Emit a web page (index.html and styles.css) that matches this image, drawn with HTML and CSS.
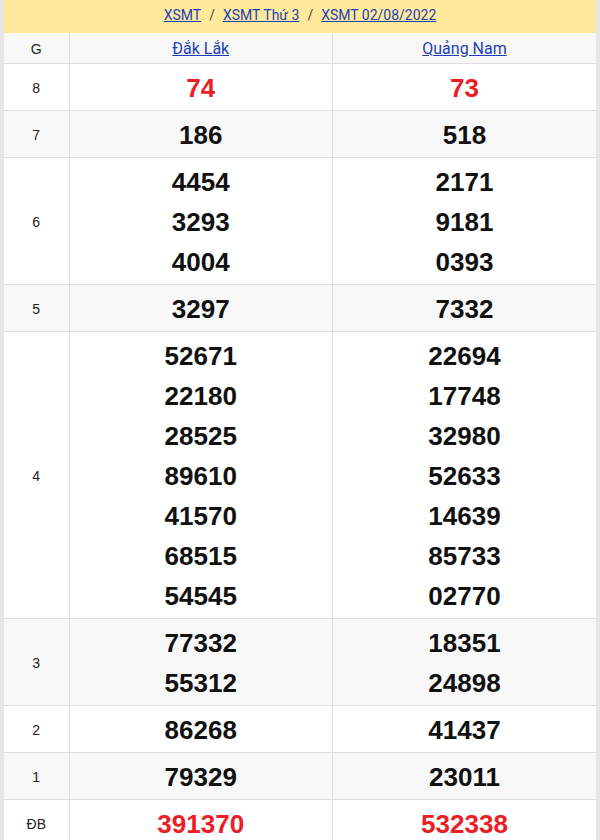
FILE: index.html
```html
<!DOCTYPE html>
<html>
<head>
<meta charset="utf-8">
<link rel="stylesheet" href="styles.css">
</head>
<body>
<div class="page">
  <div class="crumbs">
    <a href="#">XSMT</a><span class="sep">/</span><a href="#">XSMT Thứ 3</a><span class="sep">/</span><a href="#">XSMT 02/08/2022</a>
  </div>
  <table class="kq">
    <colgroup><col class="c-g"><col class="c-p"><col class="c-p"></colgroup>
    <tr class="alt head">
      <td class="lbl">G</td>
      <td><a href="#" class="prov">Đắk Lắk</a></td>
      <td><a href="#" class="prov">Quảng Nam</a></td>
    </tr>
    <tr>
      <td class="lbl">8</td>
      <td><div class="num red">74</div></td>
      <td><div class="num red">73</div></td>
    </tr>
    <tr class="alt">
      <td class="lbl">7</td>
      <td><div class="num">186</div></td>
      <td><div class="num">518</div></td>
    </tr>
    <tr>
      <td class="lbl">6</td>
      <td><div class="num">4454</div><div class="num">3293</div><div class="num">4004</div></td>
      <td><div class="num">2171</div><div class="num">9181</div><div class="num">0393</div></td>
    </tr>
    <tr class="alt">
      <td class="lbl">5</td>
      <td><div class="num">3297</div></td>
      <td><div class="num">7332</div></td>
    </tr>
    <tr>
      <td class="lbl">4</td>
      <td><div class="num">52671</div><div class="num">22180</div><div class="num">28525</div><div class="num">89610</div><div class="num">41570</div><div class="num">68515</div><div class="num">54545</div></td>
      <td><div class="num">22694</div><div class="num">17748</div><div class="num">32980</div><div class="num">52633</div><div class="num">14639</div><div class="num">85733</div><div class="num">02770</div></td>
    </tr>
    <tr class="alt">
      <td class="lbl">3</td>
      <td><div class="num">77332</div><div class="num">55312</div></td>
      <td><div class="num">18351</div><div class="num">24898</div></td>
    </tr>
    <tr>
      <td class="lbl">2</td>
      <td><div class="num">86268</div></td>
      <td><div class="num">41437</div></td>
    </tr>
    <tr class="alt">
      <td class="lbl">1</td>
      <td><div class="num">79329</div></td>
      <td><div class="num">23011</div></td>
    </tr>
    <tr>
      <td class="lbl">ĐB</td>
      <td><div class="num red">391370</div></td>
      <td><div class="num red">532338</div></td>
    </tr>
  </table>
</div>
</body>
</html>
```
FILE: styles.css
```css
html, body {
  margin: 0;
  padding: 0;
  background: #ffffff;
}
body {
  font-family: Roboto, "Liberation Sans", Arial, sans-serif;
  color: #111;
}
.page {
  width: 592px;
  border-left: 4px solid #e6e6e6;
  border-right: 4px solid #e6e6e6;
  min-height: 840px;
}
.crumbs {
  background: #ffe99b;
  height: 33px;
  line-height: 30px;
  text-align: center;
  font-size: 14px;
  color: #555;
}
.crumbs a {
  color: #1c3fb7;
  text-decoration: underline;
}
.crumbs .sep {
  margin: 0 8px;
  color: #444;
}
.kq {
  width: 592px;
  border-collapse: collapse;
  table-layout: fixed;
}
.c-g { width: 65px; }
.kq td {
  border: 1px solid #dedede;
  text-align: center;
  vertical-align: middle;
  padding: 4px 0 2px;
}
.kq tr:first-child td { border-top: none; }
.kq td:first-child { border-left: none; }
.kq td:last-child { border-right: none; }
.kq tr.alt td { background: #f8f8f8; }
.kq tr.head td {
  line-height: 24px;
  padding: 4px 0 2px;
}
.lbl {
  font-family: "Liberation Sans", Arial, sans-serif;
  font-size: 14px;
  color: #222;
}
.prov {
  font-size: 16px;
  color: #1c3fb7;
  text-decoration: underline;
}
.num {
  font-family: "Liberation Sans", Arial, sans-serif;
  font-weight: 700;
  font-size: 26px;
  line-height: 40px;
  color: #111;
}
.num.red {
  color: #ee1c25;
}
```
